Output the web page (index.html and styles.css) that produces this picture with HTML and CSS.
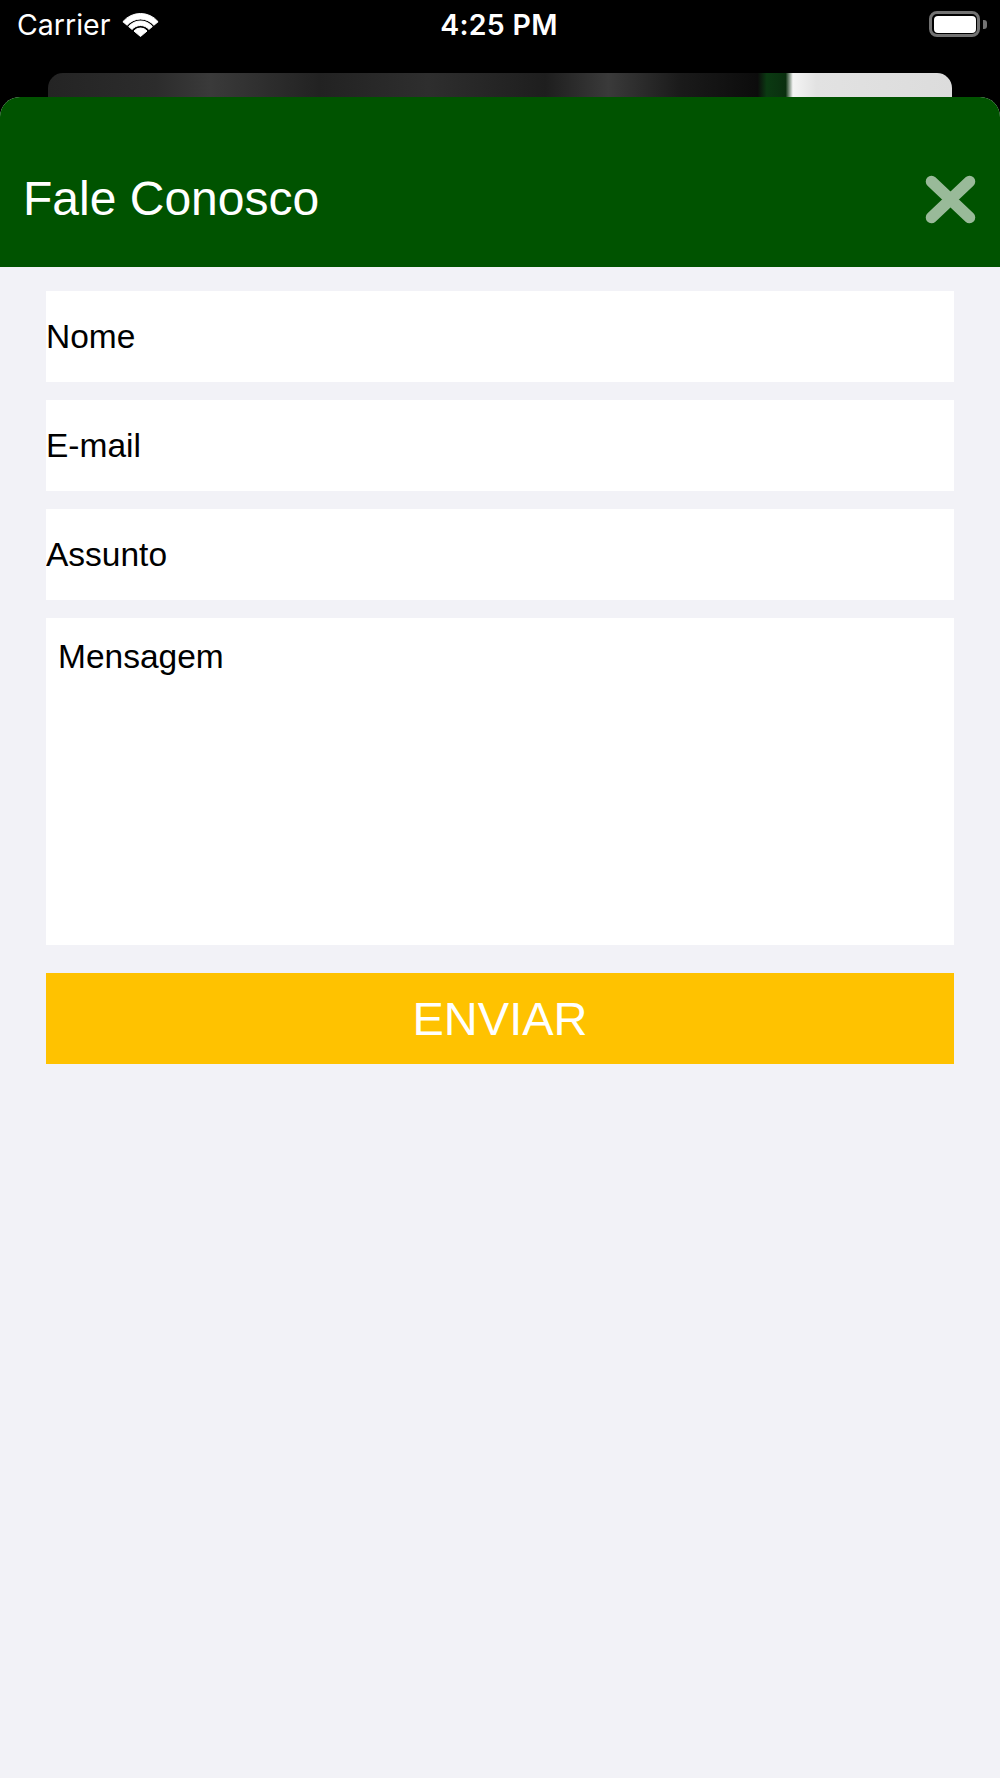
FILE: index.html
```html
<!DOCTYPE html>
<html lang="pt">
<head>
<meta charset="utf-8">
<title>Fale Conosco</title>
<link rel="stylesheet" href="styles.css">
</head>
<body>
<div class="screen">
  <div class="statusbar">
    <div class="status-left">
      <span class="carrier">Carrier</span>
      <svg class="wifi" viewBox="0 0 37 24" width="37" height="24" aria-hidden="true">
        <path d="M0.88,8.71 A23,23 0 0 1 36.12,8.71 L31.9,12.25 A17.5,17.5 0 0 0 5.1,12.25 Z"/>
        <path d="M6.63,13.54 A15.5,15.5 0 0 1 30.37,13.54 L26.93,16.43 A11,11 0 0 0 10.07,16.43 Z"/>
        <path d="M11.99,18.04 A8.5,8.5 0 0 1 25.01,18.04 L18.5,23.5 Z"/>
      </svg>
    </div>
    <div class="time">4:25 PM</div>
    <div class="status-right">
      <div class="battery">
        <div class="battery-body"><div class="battery-level"></div></div>
        <div class="battery-cap"></div>
      </div>
    </div>
  </div>
  <div class="card-behind"></div>
  <div class="sheet">
    <header class="sheet-header">
      <h1 class="sheet-title">Fale Conosco</h1>
      <button class="close-btn" type="button" aria-label="Fechar">
        <svg viewBox="0 0 51 49" width="51" height="49" aria-hidden="true">
          <path d="M6.5,6.5 L44.5,42.5 M44.5,6.5 L6.5,42.5"/>
        </svg>
      </button>
    </header>
    <form class="form">
      <input class="field" type="text" placeholder="Nome">
      <input class="field" type="email" placeholder="E-mail">
      <input class="field" type="text" placeholder="Assunto">
      <textarea class="field field-message" placeholder="Mensagem"></textarea>
      <button class="submit" type="button">ENVIAR</button>
    </form>
  </div>
</div>
</body>
</html>
```

FILE: styles.css
```css
* {
  box-sizing: border-box;
}

html, body {
  margin: 0;
  padding: 0;
  background: #000;
}

.screen {
  min-height: 100vh;
  display: flex;
  flex-direction: column;
  background: #000;
}

/* ---------- status bar ---------- */
.statusbar {
  height: 50px;
  margin-bottom: 23px;
  display: grid;
  grid-template-columns: 1fr auto 1fr;
  align-items: center;
  color: #fff;
  font-family: Inter, "Liberation Sans", sans-serif;
}

.status-left {
  display: flex;
  align-items: center;
  gap: 12px;
  padding-left: 17px;
}

.carrier {
  font-size: 28.5px;
  line-height: 1;
  font-weight: 400;
}

.wifi {
  display: block;
  fill: #fff;
  stroke: #fff;
  stroke-width: 1;
  stroke-linejoin: round;
}

.time {
  font-size: 28.5px;
  line-height: 1;
  font-weight: 600;
  letter-spacing: 0.3px;
  padding-right: 2px;
}

.status-right {
  display: flex;
  justify-content: flex-end;
  padding-right: 13px;
}

.battery {
  display: flex;
  align-items: center;
  gap: 3px;
  margin-top: -2px;
}

.battery-body {
  width: 51px;
  height: 26px;
  border: 3px solid #727272;
  border-radius: 8px;
  padding: 1.5px;
}

.battery-level {
  width: 100%;
  height: 100%;
  background: #fff;
  border-radius: 4px;
}

.battery-cap {
  width: 4px;
  height: 9px;
  background: #727272;
  border-radius: 0 3px 3px 0;
}

/* ---------- card behind the sheet ---------- */
.card-behind {
  height: 24px;
  margin: 0 48px;
  border-radius: 15px 15px 0 0;
  background: linear-gradient(90deg,
    #242424 0%, #2c2c2c 12%, #3a3a3a 18%, #222 30%, #2e2e2e 42%,
    #1e1e1e 55%, #3a3a3a 62%, #1a1a1a 70%, #0c0c0c 78.5%,
    #0b3a12 79.5%, #0a2f0f 81.6%, #f4f4f4 82.4%, #e2e2e2 85%, #dcdcdc 100%);
}

/* ---------- sheet ---------- */
.sheet {
  flex: 1;
  background: #f2f2f7;
  border-radius: 20px 20px 0 0;
  overflow: hidden;
  display: flex;
  flex-direction: column;
}

.sheet-header {
  height: 170px;
  padding: 34px 24px 0 23px;
  background: #005300;
  display: flex;
  align-items: center;
  justify-content: space-between;
}

.sheet-title {
  margin: 0;
  font-family: "Liberation Sans", Arial, sans-serif;
  font-size: 48px;
  line-height: 1;
  font-weight: 400;
  color: #fff;
}

.close-btn {
  padding: 0;
  margin: 0;
  border: 0;
  background: none;
  display: block;
  line-height: 0;
  margin-top: 1px;
}

.close-btn svg {
  display: block;
  fill: none;
  stroke: rgba(255, 255, 255, 0.6);
  stroke-width: 11.5;
  stroke-linecap: round;
}

/* ---------- form ---------- */
.form {
  display: flex;
  flex-direction: column;
  gap: 18px;
  padding: 24px 46px 0;
}

.field {
  display: block;
  width: 100%;
  height: 91px;
  margin: 0;
  padding: 0;
  border: 0;
  border-radius: 0;
  outline: none;
  background: #fff;
  font-family: "Liberation Sans", Arial, sans-serif;
  font-size: 33.5px;
  color: #000;
  -webkit-appearance: none;
  appearance: none;
}

.field::placeholder {
  color: #000;
  opacity: 1;
}

.field-message {
  height: 327px;
  padding: 20px 12px 0;
  line-height: 38px;
  resize: none;
}

.submit {
  display: block;
  width: 100%;
  height: 91px;
  margin-top: 10px;
  padding: 0;
  border: 0;
  border-radius: 0;
  background: #ffc200;
  color: #fff;
  font-family: "Liberation Sans", Arial, sans-serif;
  font-size: 47px;
  font-weight: 400;
  line-height: 1;
}
```
